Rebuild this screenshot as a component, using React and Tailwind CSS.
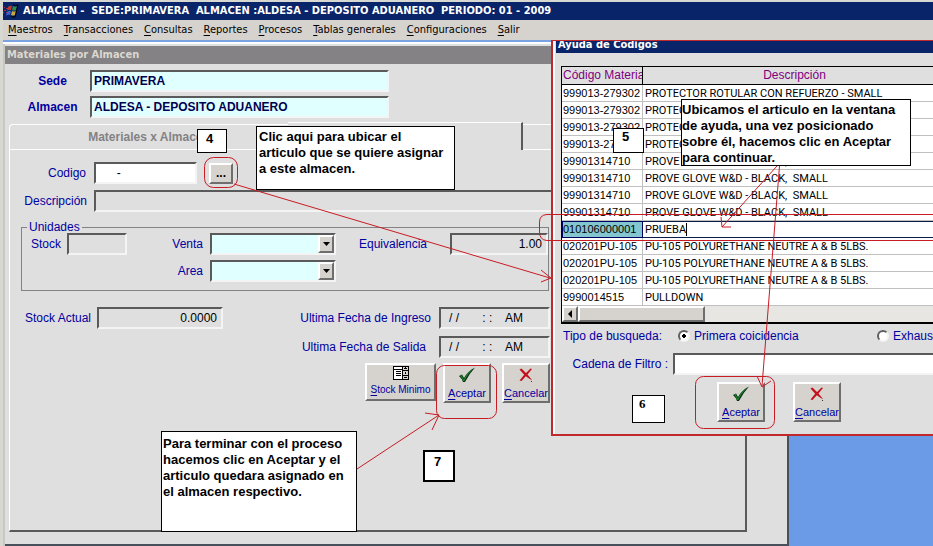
import React from "react";

const SANS = "font-['Liberation_Sans',Arial,sans-serif]";
const UI = "font-['DejaVu_Sans_Condensed','DejaVu_Sans',sans-serif]";
const SUNKEN =
  "border-2 border-t-[#5a5a5a] border-l-[#5a5a5a] border-r-[#f4f4f4] border-b-[#f4f4f4] outline-none";
const RAISED =
  "border-2 border-t-white border-l-white border-r-[#6e6e6e] border-b-[#6e6e6e] bg-[#d6d3ce]";

const MENU = [
  "Maestros",
  "Transacciones",
  "Consultas",
  "Reportes",
  "Procesos",
  "Tablas generales",
  "Configuraciones",
  "Salir",
];

const ROWS = [
  ["999013-279302", "PROTECTOR ROTULAR CON REFUERZO - SMALL"],
  ["999013-279302", "PROTECTOR ROTULAR CON REFUERZO - SMALL"],
  ["999013-279302", "PROTECTOR ROTULAR CON REFUERZO - SMALL"],
  ["999013-279302", "PROTECTOR ROTULAR CON REFUERZO - SMALL"],
  ["99901314710", "PROVE GLOVE W&D - BLACK,  SMALL"],
  ["99901314710", "PROVE GLOVE W&D - BLACK,  SMALL"],
  ["99901314710", "PROVE GLOVE W&D - BLACK,  SMALL"],
  ["99901314710", "PROVE GLOVE W&D - BLACK,  SMALL"],
  ["010106000001", "PRUEBA"],
  ["020201PU-105", "PU-105 POLYURETHANE NEUTRE A & B 5LBS."],
  ["020201PU-105", "PU-105 POLYURETHANE NEUTRE A & B 5LBS."],
  ["020201PU-105", "PU-105 POLYURETHANE NEUTRE A & B 5LBS."],
  ["9990014515", "PULLDOWN"],
];
const SELECTED = 8;

function Mnemonic({ text }) {
  return (
    <>
      <span className="underline underline-offset-2">{text[0]}</span>
      {text.slice(1)}
    </>
  );
}

function WindowsLogo() {
  return (
    <svg viewBox="0 0 16 14" className="h-[14px] w-4" aria-hidden="true">
      <path d="M1 3h1v1h-1zM3 4h2v1h-2zM1 6h2v1h-2zM0 8h1v1h-1zM3 8h2v1h-2z" fill="#b03040" />
      <path d="M5 3q2-2 4-1l-1 4q-2-1-4 1z" fill="#c03a2c" />
      <path d="M4 8q2-2 4-1l-1 4q-2-1-4 1z" fill="#3a62c8" />
      <path d="M10 2q2 1 4 0l-1 4q-2 1-4 0z" fill="#2f8a4c" />
      <path d="M9 7q2 1 4 0l-1 4q-2 1-4 0z" fill="#c8a838" />
      <path d="M10 1q3 1 5 0l-3 12q-2 1-4-1" fill="none" stroke="#000" strokeWidth="1" />
    </svg>
  );
}

function CheckIcon() {
  return (
    <svg viewBox="0 0 18 16" className="h-4 w-[18px]" aria-hidden="true">
      <path d="M1 9L4 7.500L6 11Q10 4 17 0.500Q11 7 7 15H5Q3.500 11 1 9Z" fill="#0b2b12" />
      <path d="M2 8.500L3.500 8L5.800 12.500Q9.500 5 15 1.500Q9.500 7.500 6.200 14H5Q4 10.500 2 8.500Z" fill="#1e8a2c" />
    </svg>
  );
}

function CrossIcon() {
  return (
    <svg viewBox="0 0 16 16" className="size-4" aria-hidden="true">
      <path d="M1.500 2.500L3.500 1.500L8 6L12.500 1.500L14 2L9.500 7.500L14 13L12.500 12.500L7.800 9.200L3.500 14L1.500 13.500L6.200 7.700Z" fill="#c4101c" />
      <path d="M13 14h1v1h-1z" fill="#333" />
    </svg>
  );
}

function StockIcon() {
  return (
    <svg viewBox="0 0 16 15" className="h-[15px] w-4" shapeRendering="crispEdges" aria-hidden="true">
      <path d="M0 1h16v14h-16z" fill="#000" />
      <path d="M1 2h8v2h-8zM1 5h8v9h-8z" fill="#fff" />
      <path d="M3 6h5v1h-5zM3 8h5v1h-5zM3 10h5v1h-5z" fill="#000" />
      <path d="M10 2h5v3h-5zM10 6h5v4h-5zM10 11h5v3h-5z" fill="#d6d3ce" />
      <path d="M11 4h3v-1h-3zM12 3h1v-1h-1zM12 7h1v2h-1zM11 12h3v1h-3z" fill="#000" />
    </svg>
  );
}

function IconButton({ icon, text }) {
  return (
    <button
      type="button"
      className={`${RAISED} flex h-10 w-12 shrink-0 flex-col items-center justify-between whitespace-nowrap pt-[2px] text-[11px] leading-[15px] text-[#0000a0]`}
    >
      {icon}
      <span>
        <Mnemonic text={text} />
      </span>
    </button>
  );
}

function Combo({ id }) {
  return (
    <div className="relative h-[22px] w-[126px]">
      <select id={id} className={`${SUNKEN} size-full appearance-none bg-[#e0ffff]`} />
      <span className={`${RAISED} pointer-events-none absolute inset-y-[2px] right-[2px] flex w-4 items-center justify-center`}>
        <svg viewBox="0 0 7 4" className="h-1 w-[7px]" aria-hidden="true">
          <path d="M0 0h7L3.500 4z" fill="#000" />
        </svg>
      </span>
    </div>
  );
}

function MaterialsWindow() {
  return (
    <section className="mr-36 flex flex-1 flex-col border-r-2 border-b-2 border-[#48505c] bg-[#dfdfdf] text-[12px] text-[#0000a0]">
      <h2 className={`${UI} mt-[2px] h-[18px] bg-[#848284] pl-[2px] text-[11px] leading-[18px] font-bold text-[#dcd8d0]`}>
        Materiales por Almacen
      </h2>
      <div className="flex flex-1 flex-col pt-[6px] pr-10 pb-3 pl-1">
        <div className="flex flex-col gap-1 pl-[6px] font-bold">
          <div className="flex items-center">
            <label htmlFor="sede" className="w-[75px] text-center">Sede</label>
            <input id="sede" defaultValue="PRIMAVERA" className={`${SUNKEN} h-[22px] w-[299px] bg-[#e0ffff] px-[2px] text-[#000050]`} />
          </div>
          <div className="flex items-center">
            <label htmlFor="almacen" className="w-[75px] text-center">Almacen</label>
            <input id="almacen" defaultValue="ALDESA - DEPOSITO ADUANERO" className={`${SUNKEN} h-[22px] w-[299px] bg-[#e0ffff] px-[2px] text-[#000050]`} />
          </div>
        </div>

        <div className="mt-1 flex h-[27px] items-end">
          <button type="button" className="h-[25px] w-[279px] rounded-tl-sm border-t border-l border-white font-bold text-[#848284]">
            Materiales x Almacen
          </button>
          <div className="relative -mb-px h-7 w-[235px] border-t border-r-2 border-t-white border-r-[#5a5a5a] bg-[#dfdfdf]" />
          <div className="h-[25px] flex-1 border-t border-white" />
        </div>

        <div className="flex flex-1 flex-col border border-t-white border-r-2 border-b-2 border-l-white border-r-[#5a5a5a] border-b-[#5a5a5a] pt-3">
          <div className="flex h-[22px] items-center">
            <label htmlFor="codigo" className="w-[76px] text-right">Codigo</label>
            <input id="codigo" defaultValue="     -" className={`${SUNKEN} ml-2 h-[22px] w-[103px] bg-white pl-1 whitespace-pre text-black`} />
            <button type="button" aria-label="Buscar codigo" className={`${RAISED} ml-3 h-[21px] w-6 text-[12px] leading-[14px] font-bold text-black`}>
              ...
            </button>
          </div>
          <div className="mt-[6px] flex items-center">
            <label htmlFor="descripcion" className="w-[77px] text-right">Descripción</label>
            <input id="descripcion" className={`${SUNKEN} mr-2 ml-[7px] h-[22px] min-w-0 flex-1`} />
          </div>

          <fieldset className="mt-[9px] ml-[11px] h-[70px] w-[527px] border border-[#848284] pl-[9px]">
            <legend className="-ml-1 px-[2px] leading-[12px]">Unidades</legend>
            <div className="flex">
              <div className="flex h-[22px] items-center">
                <label htmlFor="stock" className="w-[36px]">Stock</label>
                <input id="stock" className={`${SUNKEN} h-[22px] w-[60px]`} />
              </div>
              <div className="ml-3 grid grid-cols-[64px_126px] items-center gap-x-[7px] gap-y-[5px] text-right">
                <label htmlFor="venta">Venta</label>
                <Combo id="venta" />
                <label htmlFor="area">Area</label>
                <Combo id="area" />
              </div>
              <div className="ml-[23px] flex h-[22px] items-center">
                <label htmlFor="equiv" className="w-[91px]">Equivalencia</label>
                <input id="equiv" defaultValue="1.00" className={`${SUNKEN} h-[22px] w-[98px] pr-1 text-right text-black`} />
              </div>
            </div>
          </fieldset>

          <div className="mt-4 flex items-start">
            <div className="flex h-[22px] w-[214px] items-center">
              <label htmlFor="actual" className="w-[81px] text-right">Stock Actual</label>
              <input id="actual" defaultValue="0.0000" className={`${SUNKEN} ml-[6px] h-[22px] w-[126px] pr-1 text-right text-black`} />
            </div>
            <div className="grid grid-cols-[207px_111px] items-center gap-x-2 gap-y-[7px] text-right">
              <label htmlFor="ingreso">Ultima Fecha de Ingreso</label>
              <input id="ingreso" defaultValue="/ /       : :    AM" className={`${SUNKEN} h-[22px] w-[111px] pl-2 text-black`} />
              <label htmlFor="salida" className="pr-[5px]">Ultima Fecha de Salida</label>
              <input id="salida" defaultValue="/ /       : :    AM" className={`${SUNKEN} h-[22px] w-[111px] pl-2 text-black`} />
            </div>
          </div>

          <div className="mt-[5px] flex items-start pl-[355px]">
            <button type="button" className={`${RAISED} flex h-[38px] w-[71px] flex-col items-center justify-between pb-[2px] text-[10px] leading-[14px] whitespace-nowrap text-[#0000a0]`}>
              <StockIcon />
              <span>
                <Mnemonic text="Stock Minimo" />
              </span>
            </button>
            <div className="ml-[7px] flex gap-[11px]">
              <IconButton icon={<CheckIcon />} text="Aceptar" />
              <IconButton icon={<CrossIcon />} text="Cancelar" />
            </div>
          </div>
        </div>
      </div>
    </section>
  );
}

function HelpWindow() {
  return (
    <section className="absolute top-10 right-0 left-[551px] flex h-[396px] flex-col overflow-hidden border-t border-b-2 border-l-2 border-[#c0282c] bg-[#dfdfdf] text-[12px] text-[#0000a0]">
      <div className="flex flex-1 flex-col border-l-2 border-white">
        <h2 className={`${UI} ml-[1px] h-3 overflow-hidden bg-[#0a246a] pl-[2px] text-[11px] leading-[8px] font-bold text-white`}>
          Ayuda de Codigos
        </h2>
        <div className="mt-[13px] ml-[6px] overflow-hidden border-t border-b-2 border-l border-black bg-white">
          <table className="w-[384px] table-fixed border-separate border-spacing-0 text-[11px] leading-[15px] text-black">
            <colgroup>
              <col className="w-[81px]" />
              <col />
            </colgroup>
            <thead>
              <tr className="h-[18px] bg-[#dfdfdf] text-[12px] text-[#800080]">
                <th className="overflow-hidden border-r border-b border-black p-0 pl-[1px] text-left font-normal whitespace-nowrap">Código Materia</th>
                <th className="border-b border-black p-0 font-normal">Descripción</th>
              </tr>
            </thead>
            <tbody>
              {ROWS.map(([code, name], i) =>
                i === SELECTED ? (
                  <tr key={i} className="h-[17px]">
                    <td className="border border-[#000060] bg-[#84c6d0] p-0">{code}</td>
                    <td className="border-t border-b border-[#0a1c48] p-0 pl-[2px] font-['Roboto',sans-serif] whitespace-pre">
                      <span className="border-r border-black">{name}</span>
                    </td>
                  </tr>
                ) : (
                  <tr key={i} className="h-[17px]">
                    <td className="border-r border-b border-[#c0c0c0] p-0 pl-[1px] whitespace-nowrap">{code}</td>
                    <td className="border-b border-[#c0c0c0] p-0 pl-[2px] font-['Roboto',sans-serif] whitespace-pre">{name}</td>
                  </tr>
                )
              )}
            </tbody>
          </table>
          <div className="flex h-4 bg-[#e8e6e2]">
            <button type="button" aria-label="Desplazar a la izquierda" className={`${RAISED} flex w-4 items-center justify-center`}>
              <svg viewBox="0 0 4 8" className="h-2 w-1" aria-hidden="true">
                <path d="M4 0v8L0 4z" fill="#000" />
              </svg>
            </button>
            <div className={`${RAISED} w-[127px]`} />
          </div>
        </div>

        <div className="mt-[3px] flex h-[18px] items-center pl-2 whitespace-nowrap">
          <span className="w-[115px]">Tipo de busqueda:</span>
          <label className="flex w-[199px] items-center gap-1">
            <input type="radio" name="tipo" defaultChecked className="size-3 appearance-none rounded-full border-2 border-t-[#606060] border-r-[#f4f4f4] border-b-[#f4f4f4] border-l-[#606060] bg-white bg-[radial-gradient(#000_0_2px,#fff_2px)]" />
            Primera coicidencia
          </label>
          <label className="flex items-center gap-1">
            <input type="radio" name="tipo" className="size-3 appearance-none rounded-full border-2 border-t-[#606060] border-r-[#f4f4f4] border-b-[#f4f4f4] border-l-[#606060] bg-white" />
            Exhaus
          </label>
        </div>
        <div className="mt-2 flex items-center">
          <label htmlFor="filtro" className="w-[113px] text-right whitespace-nowrap">Cadena de Filtro :</label>
          <input id="filtro" className={`${SUNKEN} ml-[5px] h-[22px] min-w-0 flex-1 border-r-0 bg-white`} />
        </div>
        <div className="mt-[7px] flex gap-7 pl-[162px]">
          <IconButton icon={<CheckIcon />} text="Aceptar" />
          <IconButton icon={<CrossIcon />} text="Cancelar" />
        </div>
      </div>
    </section>
  );
}

function Annotations() {
  const note = "absolute border border-black bg-white text-[13px] leading-4 font-bold text-black";
  return (
    <>
      <div className={`${note} top-[126px] left-[256px] h-[64px] w-[199px] pt-[2px] pl-[2px] whitespace-nowrap`}>
        Clic aqui para ubicar el<br />articulo que se quiere asignar<br />a este almacen.
      </div>
      <div className={`${note} top-[99px] left-[681px] h-[67px] w-[230px] pt-[2px] whitespace-nowrap`}>
        Ubicamos el articulo en la ventana<br />de ayuda, una vez posicionado<br />sobre él, hacemos clic en Aceptar<br />para continuar.
      </div>
      <div className={`${note} top-[431px] left-[161px] h-[101px] w-[196px] pt-[4px] pl-[1px] whitespace-nowrap`}>
        Para terminar con el proceso<br />hacemos clic en Aceptar y el<br />articulo quedara asignado en<br />el almacen respectivo.
      </div>
      <div className={`${note} top-[129px] left-[197px] h-6 w-[30px] pt-px pl-2`}>4</div>
      <div className={`${note} top-[128px] left-[613px] h-[25px] w-[31px] pl-2`}>5</div>
      <div className={`${note} top-[395px] left-[632px] h-7 w-[33px] pl-[6px] font-['Liberation_Serif',serif]`}>6</div>
      <div className={`${note} top-[450px] left-[423px] h-8 w-8 border-2 pt-[2px] pl-[9px]`}>7</div>
      <svg className="pointer-events-none absolute inset-0 size-full" fill="none" stroke="#c81c24" strokeWidth="1" aria-hidden="true">
        <rect x="204.500" y="157.500" width="33" height="30" rx="9" />
        <path d="M234 184L550 278M541 270L551 278L541 282" />
        <path d="M933 214.500H547Q539.500 215 539.500 222V232Q539.500 240 547 240.500H933" />
        <path d="M777 166L722 227M721 217L722 227L731 227" />
        <path d="M779.500 166L762 386M757 376L762 387L771 381" />
        <rect x="436.500" y="365.500" width="60" height="53" rx="8" />
        <path d="M357 469L439 415M425 413L439 415L432 430" />
        <rect x="695.500" y="376.500" width="79" height="52" rx="8" />
      </svg>
    </>
  );
}

export default function App() {
  return (
    <div className={`${SANS} relative flex min-h-screen flex-col overflow-hidden bg-[#d8d8d2] pt-[2px] pl-[3px]`}>
      <header className={UI}>
        <div className="flex h-[18px] items-center gap-1 bg-[#0a246a] text-[11px] font-bold whitespace-pre text-white">
          <WindowsLogo />
          <h1>{"ALMACEN -  SEDE:PRIMAVERA  ALMACEN :ALDESA - DEPOSITO ADUANERO  PERIODO: 01 - 2009"}</h1>
        </div>
        <nav className="flex h-5 items-center gap-[11px] bg-[#d6d3ce] pl-[5px] text-[11px] text-black">
          {MENU.map((item) => (
            <button key={item} type="button" className="whitespace-nowrap">
              <Mnemonic text={item} />
            </button>
          ))}
        </nav>
      </header>
      <main className="flex flex-1 flex-col border-t-2 border-[#7aa2e0] bg-[#6b9ae6]">
        <div className="flex flex-1 flex-col">
          <div className="mr-36 h-[2px] bg-white" />
          <div className="flex flex-1 border-l-2 border-[#c8c8c0]">
            <MaterialsWindow />
          </div>
        </div>
      </main>
      <HelpWindow />
      <Annotations />
    </div>
  );
}
